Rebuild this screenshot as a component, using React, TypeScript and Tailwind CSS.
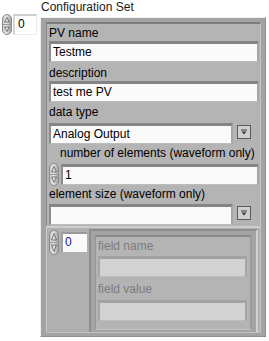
import React from "react";

const font = "font-['Liberation_Sans',Arial,sans-serif]";

function Spinner({ h = 21 }: { h?: number }) {
  return (
    <svg width="10" height={h} viewBox={`0 0 10 ${h}`} className="block shrink-0">
      <defs>
        <linearGradient id="sp" x1="0" x2="1" y1="0" y2="0">
          <stop offset="0" stopColor="#c8c8c8" />
          <stop offset="0.45" stopColor="#e6e6e6" />
          <stop offset="1" stopColor="#9a9a9a" />
        </linearGradient>
      </defs>
      <rect x="0.5" y="0.5" width="9" height={h - 1} rx="4.5" fill="url(#sp)" stroke="#8a8a8a" />
      <line x1="1" x2="9" y1={h / 2} y2={h / 2} stroke="#9a9a9a" />
      <path d={`M5 3.5 L7.5 ${h / 2 - 2.5} L2.5 ${h / 2 - 2.5} Z`} fill="none" stroke="#6a6a6a" strokeWidth="0.9" />
      <path d={`M5 ${h - 3.5} L7.5 ${h / 2 + 2.5} L2.5 ${h / 2 + 2.5} Z`} fill="none" stroke="#6a6a6a" strokeWidth="0.9" />
    </svg>
  );
}

function TextBox({ value, disabled }: { value?: string; disabled?: boolean }) {
  return (
    <div
      className={
        "h-[21px] border-t-[3px] border-l-[2px] border-r-[2px] border-b border-t-[#858585] border-l-[#8c8c8c] border-r-[#a6a6a6] border-b-[#bdbdbd] pl-[2px] leading-[16px] " +
        (disabled ? "bg-[#d2d2d2] border-t-[#a2a2a2] border-l-[#a6a6a6]" : "bg-[#fafafa]")
      }
    >
      {value}
    </div>
  );
}

function RingButton() {
  return (
    <div className="w-[14px] h-[14px] border border-[#5c5c5c] bg-[#cfcfcf] flex items-center justify-center">
      <svg width="8" height="7" viewBox="0 0 8 7">
        <line x1="1" x2="7" y1="1" y2="1" stroke="#3c3c3c" />
        <path d="M1.5 2.5 L6.5 2.5 L4 5.5 Z" fill="#3c3c3c" />
      </svg>
    </div>
  );
}

function Ring({ value }: { value?: string }) {
  return (
    <div className="flex items-center h-[22px]">
      <div className="w-[184px]">
        <TextBox value={value} />
      </div>
      <div className="ml-[4px] mt-[-2px]">
        <RingButton />
      </div>
    </div>
  );
}

export default function App() {
  return (
    <div className={`w-[269px] h-[341px] bg-white text-[12px] text-black ${font}`}>
      <div className="flex pl-[2px]">
        {/* array index */}
        <div className="flex mt-[14px]">
          <Spinner h={21} />
          <div className="w-[24px] h-[21px] ml-[1px] border-t-2 border-l-2 border-t-[#cfcfcf] border-l-[#d6d6d6] border-r border-b border-r-[#ececec] border-b-[#ececec] pl-[3px] leading-[17px]">
            0
          </div>
        </div>

        <div className="ml-[3px]">
          <div className="h-[17px] leading-[14px] pl-[1px] text-[#1a1a1a]">Configuration Set</div>
          {/* cluster frame */}
          <div className="w-[226px] h-[320px] border-t border-l border-t-[#f0f0f0] border-l-[#f0f0f0] border-r border-b border-r-[#8f8f8f] border-b-[#8f8f8f] bg-[#a3a3a3] pt-[4px] pl-[5px] pr-[4px] pb-[3px]">
            <div className="h-full border-t-2 border-l border-t-[#7d7d7d] border-l-[#8a8a8a] border-r border-b border-r-[#c4c4c4] border-b-[#c4c4c4] bg-[#b4b4b4] pl-[2px] pr-[1px] flex flex-col">
              <div className="h-[17px] leading-[16px] pt-[1px]">PV name</div>
              <TextBox value="Testme" />
              <div className="h-[19px] leading-[16px] pt-[3px]">description</div>
              <TextBox value="test me PV" />
              <div className="h-[20px] leading-[16px] pt-[2px]">data type</div>
              <Ring value="Analog Output" />
              <div className="h-[18px] leading-[16px] pt-[1px] pl-[11px]">number of elements (waveform only)</div>
              <div className="flex items-center h-[24px]">
                <Spinner h={23} />
                <div className="flex-1 ml-[2px]">
                  <TextBox value="1" />
                </div>
              </div>
              <div className="h-[17px] leading-[16px]">element size (waveform only)</div>
              <Ring />
              {/* array of clusters */}
              <div className="mt-[1px] ml-[-3px] mr-[-1px] flex-1 border-t-2 border-l border-t-[#cdcdcd] border-l-[#c9c9c9] bg-[#b0b0b0] flex">
                <div className="w-[42px] pl-[2px] pt-[2px] flex items-start">
                  <Spinner h={25} />
                  <div className="w-[26px] h-[20px] mt-[2px] ml-[2px] bg-[#fafafa] border-t-2 border-l-2 border-t-[#9a9a9a] border-l-[#a0a0a0] pl-[2px] leading-[16px] text-[#1a1a80]">
                    0
                  </div>
                </div>
                <div className="flex-1 mr-[2px] mt-[1px] border-t-2 border-l-2 border-t-[#8d8d8d] border-l-[#8d8d8d] border-r-2 border-r-[#d0d0d0] bg-[#a4a4a4] pt-[4px] pl-[4px] pr-[4px] pb-[2px]">
                  <div className="h-full border-t-2 border-l border-t-[#8a8a8a] border-l-[#959595] border-r-2 border-b border-r-[#9b9b9b] border-b-[#c2c2c2] bg-[#b4b4b4] pl-[2px] pr-[3px] text-[#7f7a80]">
                    <div className="h-[19px] leading-[16px] pt-[1px]">field name</div>
                    <TextBox disabled />
                    <div className="h-[23px] leading-[16px] pt-[4px]">field value</div>
                    <TextBox disabled />
                  </div>
                </div>
              </div>
            </div>
          </div>
        </div>
      </div>
    </div>
  );
}
